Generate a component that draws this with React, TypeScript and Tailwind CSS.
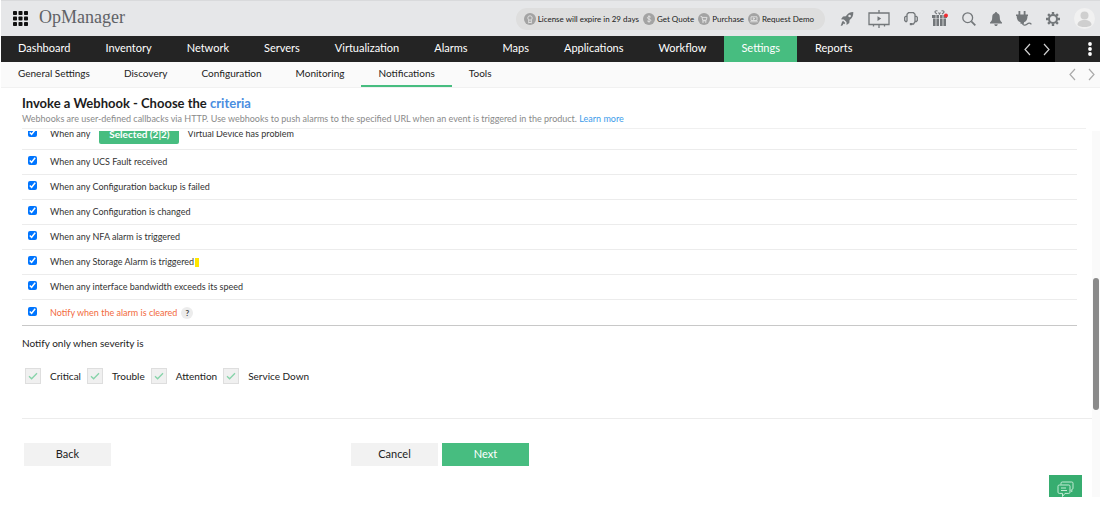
import React from 'react';

const navItems = ['Dashboard', 'Inventory', 'Network', 'Servers', 'Virtualization', 'Alarms', 'Maps', 'Applications', 'Workflow', 'Settings', 'Reports'];
const subNavItems = ['General Settings', 'Discovery', 'Configuration', 'Monitoring', 'Notifications', 'Tools'];
const criteria = [
  'When any UCS Fault received',
  'When any Configuration backup is failed',
  'When any Configuration is changed',
  'When any NFA alarm is triggered',
  'When any Storage Alarm is triggered',
  'When any interface bandwidth exceeds its speed',
];
const severities = ['Critical', 'Trouble', 'Attention', 'Service Down'];

const App: React.FC = () => {
  return (
    <div className="relative ml-px mr-[6px] bg-white font-['Lato',sans-serif] text-[#333]">
      <TopBar />
      <MainNav />
      <SubNav />

      <main>
        <div className="pl-[21px] pt-[7px]">
          <h1 className="text-[13px] leading-4 font-bold text-[#1c1c1c]">
            Invoke a Webhook - Choose the <span className="text-[#4a8ee0]">criteria</span>
          </h1>
          <p className="mr-[14px] h-[18px] border-b border-[#f0f0f0] text-[9px] leading-4 whitespace-nowrap text-[#8a8a8a]">
            Webhooks are user-defined callbacks via HTTP. Use webhooks to push alarms to the specified URL when an event is triggered in the product.{' '}
            <a href="#learn" className="text-[#3c9bea]">Learn more</a>
          </p>
        </div>

        <div className="mt-[2px] flex">
          <div className="flex-1 overflow-hidden pl-[21px] pb-[31px]">
            <CriteriaList />
            <Severity />
            <div className="border-t border-[#ececec]" />
            <div className="mt-6 ml-[2px] flex">
              <button type="button" className="h-[23px] w-[87px] bg-[#f2f2f2] text-[11px] text-[#222]">Back</button>
              <div className="ml-[240px] flex gap-1">
                <button type="button" className="h-[23px] w-[87px] bg-[#f2f2f2] text-[11px] text-[#222]">Cancel</button>
                <button type="button" className="h-[23px] w-[87px] bg-[#47bd80] text-[11px] text-white">Next</button>
              </div>
            </div>
          </div>
          <div className="w-2 bg-[#fafafa] px-px pt-[147px]">
            <div className="h-[132px] rounded-full bg-[#8a8a8a]" />
          </div>
        </div>
      </main>

      <button type="button" aria-label="Chat" className="absolute right-[18px] bottom-0 flex h-[22px] w-[33px] items-end justify-center bg-[#37ad70]">
        <ChatIcon />
      </button>
    </div>
  );
};

const TopBar = () => (
  <header className="flex h-9 items-center border-t border-[#d9dadc] bg-[#e6e7e9] pl-3 pr-[5px]">
    <button type="button" aria-label="Apps">
      <svg width="15" height="15" viewBox="0 0 15 15" fill="#111">
        {[0, 5.5, 11].map(y => [0, 5.5, 11].map(x => <rect key={`${x}-${y}`} x={x} y={y} width="4" height="4" rx="0.8" />))}
      </svg>
    </button>
    <span className="ml-[11px] pb-1 font-['Liberation_Serif',serif] text-[18px] leading-6 text-[#606266]">OpManager</span>

    <div className="ml-auto flex h-[22px] items-center gap-1 rounded-full bg-[#dedede] pl-2 pr-[11px] text-[8px] text-[#222]">
      <PillLink label="License will expire in 29 days">
        <circle cx="6" cy="5" r="2.2" />
        <path d="M4.7 7v3L6 9.2 7.3 10V7" />
      </PillLink>
      <PillLink label="Get Quote">
        <path d="M7.8 4.2C7.4 3.5 4.4 3.2 4.4 4.8S7.8 5.8 7.8 7.3 4.6 8.9 4.2 7.8M6 2.3v7.4" />
      </PillLink>
      <PillLink label="Purchase">
        <path d="M2.6 3.5h1.2l.9 3.7h3.5l.8-2.8H4M4.4 7.8h4" />
        <circle cx="5" cy="9" r="0.4" />
        <circle cx="7.8" cy="9" r="0.4" />
      </PillLink>
      <PillLink label="Request Demo">
        <path d="M3 3.8h6v3.7H3zM2.2 8.8h7.6M5.3 4.8v1.7L6.8 5.6z" />
      </PillLink>
    </div>

    <div className="ml-[15px] flex items-center gap-[14px] text-[#73777a]">
      <button type="button" aria-label="Getting started">
        <svg width="14" height="16" viewBox="0 0 14 16" fill="currentColor">
          <path fillRule="evenodd" d="M13.3 1C10 1 7.600 2.600 5.800 5.200L3 5.500 1 8.300l2.900.1 2.600 2.700.1 3 2.700-2.100.3-2.900C12.200 7.300 13.500 4.400 13.300 1zM9.600 6.300a1.300 1.300 0 1 1 0-2.600 1.300 1.300 0 0 1 0 2.600z" />
          <path d="M3 9.800l2.300 2.300-1.100 1.200-.8-.7-.6 1.700L.7 15l.8-2.400L2 11z" />
        </svg>
      </button>
      <button type="button" aria-label="Presentation">
        <svg width="22" height="18" viewBox="0 0 22 18" fill="none" stroke="currentColor" strokeWidth="1.300">
          <path d="M1 3h20v11.500H1zM11 0v3M11 14.500V18M5.500 14.500v2M16.500 14.500v2" />
          <path d="M9.500 6.300v4.600l3.700-2.300z" fill="currentColor" stroke="none" />
        </svg>
      </button>
      <button type="button" aria-label="Support">
        <svg width="14" height="15" viewBox="0 0 14 15" fill="none" stroke="currentColor" strokeWidth="1.300">
          <path d="M3 10.500V3.200L4.500 1.700h5L11 3.200v7.300L9.500 13H8" />
          <path d="M3 5.300H1.700L.7 6.300v3.200l1 1H3M11 5.300h1.300l1 1v3.200l-1 1H11" />
          <rect x="5.800" y="12" width="2.400" height="2.200" fill="currentColor" stroke="none" />
        </svg>
      </button>
      <button type="button" aria-label="What's new">
        <svg width="16" height="17" viewBox="0 0 16 17">
          <path d="M5.500 1C3.500.3 2.500 1.500 3.300 2.700L5 4M9.500 1c2-.7 3 .5 2.200 1.700L10 4M6.500 2.500l1 1.500 1-1.500" fill="none" stroke="currentColor" strokeWidth="1.100" />
          <path d="M0 5h3.600v3H0zM4.400 5H7v3H4.400zM8 5h2.600v3H8zM11.400 5H15v3h-3.600zM1 8.600h2.600V16H1zM4.400 8.600H7V16H4.400zM8 8.600h2.600V16H8zM11.400 8.600H14V16h-2.600z" fill="currentColor" />
          <circle cx="14" cy="5.500" r="2" fill="#f02c32" />
        </svg>
      </button>
      <button type="button" aria-label="Search">
        <svg width="14" height="14" viewBox="0 0 14 14" fill="none" stroke="currentColor" strokeWidth="1.300">
          <circle cx="5.700" cy="5.700" r="4.900" />
          <path d="M9.300 9.300l4 4" strokeWidth="1.800" />
        </svg>
      </button>
      <button type="button" aria-label="Alarms">
        <svg width="12" height="14" viewBox="0 0 12 14" fill="currentColor">
          <path d="M6 0c.7 0 1 .5 1 1.100C9 1.700 9.800 3.300 9.800 5.500c0 2.600.7 3.800 2.200 5.100v.9H0v-.9c1.500-1.300 2.200-2.500 2.200-5.100 0-2.200.8-3.800 2.800-4.400C5 .5 5.300 0 6 0zM4.300 12.200h3.400C7.700 13.300 7 14 6 14s-1.700-.7-1.700-1.800z" />
        </svg>
      </button>
      <button type="button" aria-label="Integrations">
        <svg width="16" height="15" viewBox="0 0 16 15" fill="currentColor">
          <path d="M2.500 0h1.800v3.500h3.400V0h1.800v3.500H12v1.400h-.5c0 3.600-1.200 5.300-3.500 6.300v1.600H4.500v-1.600C2 10.200.7 8.500.7 4.900H0V3.500h2.500z" />
          <path d="M6.300 12c.4 2.500 3 2.600 4.600 1.200s3-1.700 4.500.1" fill="none" stroke="currentColor" strokeWidth="1.300" />
        </svg>
      </button>
      <button type="button" aria-label="Quick settings">
        <svg width="14" height="14" viewBox="0 0 14 14" fill="none" stroke="currentColor">
          <circle cx="7" cy="7" r="4" strokeWidth="2" />
          <path d="M7 0v2.500M7 11.500V14M0 7h2.500M11.500 7H14M2.100 2.100l1.700 1.700M10.200 10.200l1.700 1.700M11.900 2.100l-1.700 1.700M3.800 10.200l-1.700 1.700" strokeWidth="2.400" />
        </svg>
      </button>
      <button type="button" aria-label="Profile">
        <svg width="21" height="21" viewBox="0 0 21 21">
          <circle cx="10.500" cy="10.500" r="10.500" fill="#f1f1f1" />
          <circle cx="10.500" cy="7.500" r="4" fill="#cfcfcf" />
          <path d="M3.500 17c0-3.500 3-5 7-5s7 1.500 7 5c-3 2.800-11 2.800-14 0z" fill="#cfcfcf" />
        </svg>
      </button>
    </div>
  </header>
);

const PillLink = ({ label, children }: { label: string; children: React.ReactNode }) => (
  <a href="#license" className="flex items-center gap-[2px] whitespace-nowrap">
    <svg width="12" height="12" viewBox="0 0 12 12" fill="none" stroke="#e4e4e4" strokeWidth="0.9">
      <circle cx="6" cy="6" r="6" fill="#a3a3a3" stroke="none" />
      {children}
    </svg>
    {label}
  </a>
);

const MainNav = () => (
  <nav className="flex h-[26px] items-stretch gap-px bg-[#242424] text-[11px] text-white">
    {navItems.map(item => (
      <a
        key={item}
        href={`#${item.toLowerCase()}`}
        className={`flex items-center px-[17px] pb-[2px] ${item === 'Settings' ? 'bg-[#47bd80]' : ''}`}
      >
        {item}
      </a>
    ))}
    <div className="ml-auto flex w-9 items-center justify-between bg-black px-[5px]">
      <Arrow label="Previous menu" d="M6 1L1 6.500 6 12" color="#d0d0d0" />
      <Arrow label="Next menu" d="M1 1l5 5.500L1 12" color="#d0d0d0" />
    </div>
    <button type="button" aria-label="More" className="ml-8 mr-2">
      <svg width="4" height="14" viewBox="0 0 4 14" fill="#fff">
        <circle cx="2" cy="2" r="1.900" />
        <circle cx="2" cy="7" r="1.900" />
        <circle cx="2" cy="12" r="1.900" />
      </svg>
    </button>
  </nav>
);

const SubNav = () => (
  <nav className="flex h-[26px] items-stretch border-b border-[#f1f1f1] bg-[#fafafa] text-[10px] text-[#222]">
    {subNavItems.map(item => (
      <a
        key={item}
        href={`#${item.toLowerCase()}`}
        className={`flex items-center border-b-2 px-[17px] ${item === 'Notifications' ? 'border-[#47bd80]' : 'border-transparent'}`}
      >
        {item}
      </a>
    ))}
    <div className="ml-auto mr-[5px] flex items-center gap-3">
      <Arrow label="Previous" d="M6 1L1 6.500 6 12" color="#aaa" />
      <Arrow label="Next" d="M1 1l5 5.500L1 12" color="#aaa" />
    </div>
  </nav>
);

const Arrow = ({ label, d, color }: { label: string; d: string; color: string }) => (
  <button type="button" aria-label={label}>
    <svg width="7" height="13" viewBox="0 0 7 13" fill="none" stroke={color} strokeWidth="1.200">
      <path d={d} />
    </svg>
  </button>
);

const CriteriaList = () => (
  <div className="-mt-[7px] mr-[15px] text-[9px]">
    <div className="flex h-[26px] items-center border-b border-[#ececec] pb-[5px] pl-[6px]">
      <input id="virtual-device" type="checkbox" defaultChecked className="mb-[3px] size-[9px] accent-[#0075ff]" />
      <label htmlFor="virtual-device" className="ml-[13px]">When any</label>
      <button type="button" className="ml-[9px] h-[20px] w-20 rounded-xs bg-[#47bd80] text-[10px] font-bold text-white">Selected (2|2)</button>
      <span className="ml-2">Virtual Device has problem</span>
    </div>
    {criteria.map((text, i) => (
      <div key={text} className="flex h-[25px] items-center border-b border-[#ececec] pl-[6px]">
        <input id={`criteria-${i}`} type="checkbox" defaultChecked className="mb-[3px] size-[9px] accent-[#0075ff]" />
        <label htmlFor={`criteria-${i}`} className="ml-[13px]">{text}</label>
        {text.includes('Storage') && <span className="ml-px h-[9px] w-1 bg-[#ffe600]" />}
      </div>
    ))}
    <div className="flex h-[26px] items-center border-b border-[#c8c8c8] pl-[6px]">
      <input id="cleared" type="checkbox" defaultChecked className="mb-[3px] size-[9px] accent-[#0075ff]" />
      <label htmlFor="cleared" className="ml-[13px] text-[#f26a3d]">Notify when the alarm is cleared</label>
      <button type="button" aria-label="Help" className="ml-1 size-3 rounded-full bg-[#ececec] text-[8px] leading-3 font-bold text-[#444]">?</button>
    </div>
  </div>
);

const Severity = () => (
  <fieldset className="pt-[9px] pb-[34px] text-[10px] text-[#222]">
    <legend className="contents">
      <span className="block leading-4">Notify only when severity is</span>
    </legend>
    <div className="mt-[17px] flex items-center gap-[6px] pl-[3px]">
      {severities.map(name => (
        <label key={name} className="flex items-center gap-[9px]">
          <span className="grid size-4 place-items-center">
            <input type="checkbox" defaultChecked className="col-start-1 row-start-1 size-4 appearance-none border border-[#dedede] bg-[#f0f0f0]" />
            <svg className="pointer-events-none col-start-1 row-start-1" width="10" height="8" viewBox="0 0 10 8" fill="none" stroke="#86d3a9" strokeWidth="1.300">
              <path d="M1 4.200l2.600 2.600L9 1.200" />
            </svg>
          </span>
          {name}
        </label>
      ))}
    </div>
  </fieldset>
);

const ChatIcon = () => (
  <svg width="17" height="16" viewBox="0 0 17 16" fill="none" stroke="#c4ecd5" strokeWidth="1">
    <path d="M4 3.500V2.200C4 1.400 4.500 1 5.200 1h9.600c.8 0 1.200.4 1.200 1.200v5c0 .8-.4 1.200-1.200 1.200v2.300l-1-1" />
    <path d="M2.200 4h9.600c.8 0 1.200.5 1.200 1.200v6c0 .8-.4 1.200-1.200 1.200H8L5.500 15.500v-3.100H2.200C1.400 12.400 1 12 1 11.200v-6C1 4.500 1.400 4 2.200 4zM4 7h5M4 9.500h6" />
  </svg>
);

export default App;
